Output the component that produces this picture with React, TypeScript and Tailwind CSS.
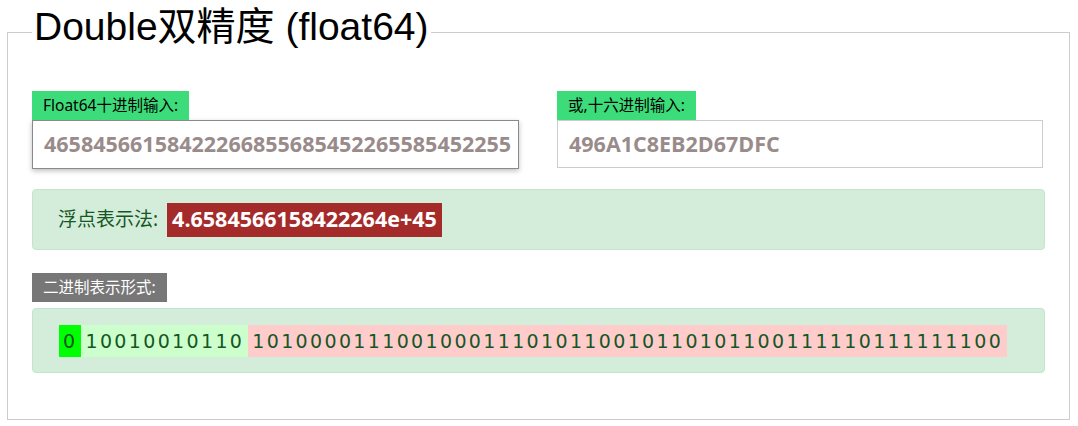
import React from 'react';

const cjk = "font-['Noto_Sans','Noto_Sans_CJK_SC',sans-serif]";

function App() {
  const sign = '0';
  const exponent = '10010010110';
  const mantissa = '1010000111001000111010110010110101100111110111111100';

  return (
    <div className="w-[1078px] h-[426px] bg-white overflow-hidden">
      <fieldset className="mt-[6px] ml-[7px] mr-[8px] h-[414px] border border-[#cccccc] px-[24px]">
        <legend className="px-[2px] pb-[10px] text-[39px] leading-[42px] text-black font-['Liberation_Sans','Noto_Sans_CJK_SC',sans-serif]">
          Double双精度 (float64)
        </legend>

        <div className="mt-[33px] flex gap-[38px]">
          <div className="w-[487px]">
            <div className={`inline-block bg-[#3ddc7a] px-[11px] text-[15.5px] leading-[29px] text-black ${cjk}`}>
              Float64十进制输入:
            </div>
            <div className="h-[49px] border border-[#8a8a8a] shadow-[0_2px_5px_rgba(0,0,0,0.25)] px-[11px] flex items-center overflow-hidden">
              <span className="whitespace-nowrap text-[21.5px] font-bold text-[#9a8b8b] font-['Open_Sans',sans-serif]">
                46584566158422266855685452265585452255
              </span>
            </div>
          </div>
          <div className="w-[486px]">
            <div className={`inline-block bg-[#3ddc7a] px-[11px] text-[15.5px] leading-[29px] text-black ${cjk}`}>
              或,十六进制输入:
            </div>
            <div className="h-[48px] border border-[#cccccc] px-[11px] flex items-center overflow-hidden">
              <span className="whitespace-nowrap text-[21.5px] font-bold text-[#9a8b8b] font-['Open_Sans',sans-serif]">
                496A1C8EB2D67DFC
              </span>
            </div>
          </div>
        </div>

        <div className="mt-[20px] h-[61px] rounded-[4px] border border-[#c3e6cb] bg-[#d4edda] pl-[25px] flex items-center gap-[9px]">
          <span className={`text-[19px] text-[#155724] ${cjk}`}>浮点表示法:</span>
          <span className="h-[34px] bg-[#a52a2a] px-[5px] flex items-center text-[21.5px] font-bold text-white font-['Open_Sans',sans-serif]">
            4.6584566158422264e+45
          </span>
        </div>

        <div className={`mt-[23px] inline-block bg-[#777777] px-[11px] text-[15.5px] leading-[29px] text-white ${cjk}`}>
          二进制表示形式:
        </div>

        <div className="mt-[6px] h-[65px] rounded-[4px] border border-[#c3e6cb] bg-[#d4edda] pl-[26px] flex items-center">
          <div className="flex text-[19px] leading-[32px] tracking-[2.35px] text-[#155724] font-['DejaVu_Sans',sans-serif]">
            <span className="bg-[#00ff00] px-[4px]">{sign}</span>
            <span className="bg-[#ccffcc] px-[4px]">{exponent}</span>
            <span className="bg-[#ffcccc] px-[4px]">{mantissa}</span>
          </div>
        </div>
      </fieldset>
    </div>
  );
}

export default App;
